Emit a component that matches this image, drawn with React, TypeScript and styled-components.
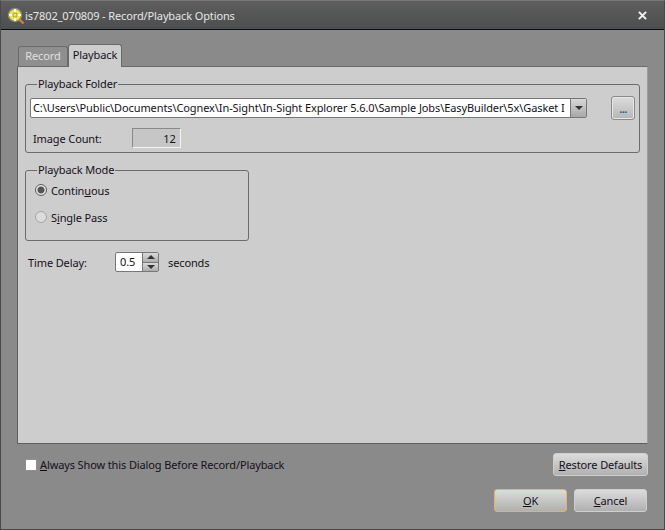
import React from "react";
import styled, { createGlobalStyle } from "styled-components";

const GlobalStyle = createGlobalStyle`
  html, body {
    margin: 0;
    padding: 0;
    background: #8a8a8a;
  }
  body {
    font-family: "Noto Sans", "DejaVu Sans", sans-serif;
    font-size: 11px;
    letter-spacing: -0.12px;
    color: #15101c;
  }
`;

const App: React.FC = () => {
  return (
    <Window>
      <GlobalStyle />
      <TitleBar>
        <AppIcon viewBox="0 0 18 18">
          <circle cx="8" cy="8" r="6.5" fill="#f2e63e" stroke="#8b8b80" strokeWidth="1.4" />
          <path d="M8 2 V14 M2 8 H14" stroke="#fbfbf0" strokeWidth="2" />
          <circle cx="8" cy="8" r="2.2" fill="#f2e63e" stroke="#7a7a70" strokeWidth="0.8" />
          <path d="M12.6 12.6 L16.5 16.5" stroke="#d9822b" strokeWidth="2.2" />
        </AppIcon>
        <Title>is7802_070809 - Record/Playback Options</Title>
        <CloseIcon viewBox="0 0 10 10">
          <path d="M1 1 L9 9 M9 1 L1 9" stroke="#f2f2f2" strokeWidth="2.2" />
        </CloseIcon>
      </TitleBar>

      <Body>
        <TabRow>
          <Tab>Record</Tab>
          <Tab active>Playback</Tab>
        </TabRow>

        <TabPanel>
          <FolderGroup>
            <Legend>Playback Folder</Legend>
            <FolderRow>
              <Combo>
                <ComboText>
                  C:\Users\Public\Documents\Cognex\In-Sight\In-Sight Explorer 5.6.0\Sample Jobs\EasyBuilder\5x\Gasket I
                </ComboText>
                <ComboArrow>
                  <ArrowDown />
                </ComboArrow>
              </Combo>
              <BrowseButton>...</BrowseButton>
            </FolderRow>
            <CountRow>
              <span>Image Count:</span>
              <CountBox>12</CountBox>
            </CountRow>
          </FolderGroup>

          <ModeGroup>
            <Legend>Playback Mode</Legend>
            <RadioRow>
              <Radio checked />
              <span>
                Contin<u>u</u>ous
              </span>
            </RadioRow>
            <RadioRow>
              <Radio />
              <span>
                S<u>i</u>ngle Pass
              </span>
            </RadioRow>
          </ModeGroup>

          <DelayRow>
            <DelayLabel>Time Delay:</DelayLabel>
            <Spinner>
              <SpinnerValue>0.5</SpinnerValue>
              <SpinnerButtons>
                <SpinnerButton>
                  <ArrowUp />
                </SpinnerButton>
                <SpinnerButton>
                  <ArrowDown />
                </SpinnerButton>
              </SpinnerButtons>
            </Spinner>
            <span>seconds</span>
          </DelayRow>
        </TabPanel>

        <OptionRow>
          <CheckLabel>
            <CheckBox />
            <span>
              <u>A</u>lways Show this Dialog Before Record/Playback
            </span>
          </CheckLabel>
          <RestoreButton>
            <u>R</u>estore Defaults
          </RestoreButton>
        </OptionRow>

        <ActionRow>
          <ActionButton primary>
            <u>O</u>K
          </ActionButton>
          <ActionButton>
            <u>C</u>ancel
          </ActionButton>
        </ActionRow>
      </Body>
    </Window>
  );
};

export default App;

// Styled components
const Window = styled.div`
  width: 665px;
  height: 530px;
  box-sizing: border-box;
  display: flex;
  flex-direction: column;
  overflow: hidden;
  background: #8a8a8a;
  border: 1px solid #4a4a4a;
  border-top-color: #777;
`;

const TitleBar = styled.div`
  height: 29px;
  flex: none;
  display: flex;
  align-items: center;
  padding: 1px 17px 0 6px;
  box-sizing: border-box;
  background: linear-gradient(#5e5e5e, #4d4e4f);
  border-bottom: 1px solid #0c0c0c;
`;

const AppIcon = styled.svg`
  width: 18px;
  height: 18px;
  flex: none;
`;

const Title = styled.div`
  flex: 1;
  font-size: 11px;
  letter-spacing: -0.12px;
  color: #e6e6e6;
`;

const CloseIcon = styled.svg`
  width: 9px;
  height: 9px;
`;

const Body = styled.div`
  flex: 1;
  display: flex;
  flex-direction: column;
  padding: 13px 16px 0;
`;

const TabRow = styled.div`
  display: flex;
  align-items: flex-end;
  height: 23px;
  padding-left: 1px;
`;

const Tab = styled.div<{ active?: boolean }>`
  box-sizing: border-box;
  height: ${({ active }) => (active ? "23px" : "20px")};
  width: ${({ active }) => (active ? "54px" : "50px")};
  display: flex;
  align-items: center;
  justify-content: center;
  padding-bottom: 3px;
  border: 1px solid #6a6a6a;
  border-bottom: none;
  border-radius: 3px 3px 0 0;
  background: ${({ active }) => (active ? "#cdcdcd" : "#8f8f8f")};
  color: ${({ active }) => (active ? "#15101c" : "#e0e0e0")};
  margin-bottom: ${({ active }) => (active ? "-1px" : "0")};
  position: relative;
  z-index: 1;
`;

const TabPanel = styled.div`
  width: 631px;
  height: 378px;
  box-sizing: border-box;
  display: flex;
  flex-direction: column;
  align-items: flex-start;
  padding: 10px 7px 0;
  background: #cdcdcd;
  border: 1px solid #5e5e5e;
  border-top-color: #6a6a6a;
  border-right-color: #9c9c9c;
`;

const Group = styled.fieldset`
  margin: 0;
  padding: 0;
  box-sizing: border-box;
  border: 1px solid #6c6c6c;
  border-radius: 3px;
  min-width: 0;
`;

const Legend = styled.legend`
  padding: 0 1px;
  margin-left: 11px;
  line-height: 14px;
`;

const FolderGroup = styled(Group)`
  width: 615px;
  height: 76px;
`;

const FolderRow = styled.div`
  display: flex;
  align-items: center;
  gap: 24px;
  margin: 5px 0 0 4px;
`;

const Combo = styled.div`
  width: 557px;
  height: 20px;
  box-sizing: border-box;
  display: flex;
  background: #fff;
  border: 1px solid #777;
  border-radius: 2px;
`;

const ComboText = styled.div`
  flex: 1;
  overflow: hidden;
  white-space: nowrap;
  padding-left: 2px;
  line-height: 18px;
  letter-spacing: -0.1px;
`;

const ComboArrow = styled.div`
  width: 15px;
  flex: none;
  display: flex;
  align-items: center;
  justify-content: center;
  background: linear-gradient(#d8d8d8, #a8a8a8);
  border-left: 1px solid #777;
`;

const ArrowDown = styled.div`
  width: 0;
  height: 0;
  border-left: 4px solid transparent;
  border-right: 4px solid transparent;
  border-top: 4px solid #333;
`;

const ArrowUp = styled.div`
  width: 0;
  height: 0;
  border-left: 4px solid transparent;
  border-right: 4px solid transparent;
  border-bottom: 4px solid #333;
`;

const BrowseButton = styled.div`
  width: 24px;
  height: 24px;
  box-sizing: border-box;
  display: flex;
  align-items: flex-end;
  justify-content: center;
  padding-bottom: 6px;
  line-height: 8px;
  font-weight: bold;
  letter-spacing: -0.6px;
  color: #1c5f9c;
  background: linear-gradient(#dcdcdc, #b6b6b6);
  border: 1px solid #8a8a8a;
  border-radius: 3px;
  box-shadow: inset 0 0 0 1px #e6e6e6;
`;

const CountRow = styled.div`
  display: flex;
  align-items: center;
  gap: 30px;
  margin: 8px 0 0 7px;
`;

const CountBox = styled.div`
  width: 49px;
  height: 20px;
  box-sizing: border-box;
  text-align: right;
  padding-right: 4px;
  line-height: 19px;
  background: #c6c6c6;
  border: 1px solid #f4f4f4;
  border-top-color: #8a8a8a;
  border-left-color: #8a8a8a;
`;

const ModeGroup = styled(Group)`
  width: 224px;
  height: 78px;
  margin-top: 10px;
  padding-top: 5px;
  display: flex;
  flex-direction: column;
  gap: 11px;
`;

const RadioRow = styled.div`
  display: flex;
  align-items: center;
  gap: 4px;
  height: 16px;
  margin-left: 9px;
`;

const Radio = styled.div<{ checked?: boolean }>`
  width: 12px;
  height: 12px;
  border-radius: 50%;
  flex: none;
  box-sizing: border-box;
  border: 1px solid ${({ checked }) => (checked ? "#5c5c5c" : "#a4a4a4")};
  background: ${({ checked }) =>
    checked
      ? "radial-gradient(circle, #555 0 3px, #e8e8e8 4px)"
      : "#dcdcdc"};
`;

const DelayRow = styled.div`
  display: flex;
  align-items: center;
  margin: 11px 0 0 3px;
`;

const DelayLabel = styled.span`
  width: 87px;
`;

const Spinner = styled.div`
  width: 44px;
  height: 20px;
  box-sizing: border-box;
  display: flex;
  margin-right: 9px;
  background: #fff;
  border: 1px solid #777;
  border-radius: 2px;
`;

const SpinnerValue = styled.div`
  flex: 1;
  padding-left: 4px;
  line-height: 18px;
`;

const SpinnerButtons = styled.div`
  width: 15px;
  display: flex;
  flex-direction: column;
  border-left: 1px solid #777;
`;

const SpinnerButton = styled.div`
  flex: 1;
  display: flex;
  align-items: center;
  justify-content: center;
  background: linear-gradient(#dadada, #adadad);
  & + & {
    border-top: 1px solid #777;
  }
`;

const OptionRow = styled.div`
  width: 631px;
  display: flex;
  align-items: center;
  justify-content: space-between;
  margin-top: 9px;
`;

const CheckLabel = styled.div`
  display: flex;
  align-items: center;
  gap: 3px;
  margin-left: 8px;
`;

const CheckBox = styled.div`
  width: 12px;
  height: 12px;
  box-sizing: border-box;
  background: #fff;
  border: 1px solid #8f8f8f;
`;

const Button = styled.div`
  box-sizing: border-box;
  display: flex;
  align-items: center;
  justify-content: center;
  white-space: pre;
  background: linear-gradient(#dcdcdc, #b0b0b0);
  border: 1px solid #cfcfcf;
  border-radius: 3px;
`;

const RestoreButton = styled(Button)`
  width: 95px;
  height: 23px;
`;

const ActionRow = styled.div`
  width: 631px;
  display: flex;
  justify-content: flex-end;
  gap: 7px;
  margin-top: 13px;
  padding-right: 1px;
  box-sizing: border-box;
`;

const ActionButton = styled(Button)<{ primary?: boolean }>`
  width: 73px;
  height: 23px;
  border-color: ${({ primary }) => (primary ? "#e4b94a" : "#cfcfcf")};
`;
